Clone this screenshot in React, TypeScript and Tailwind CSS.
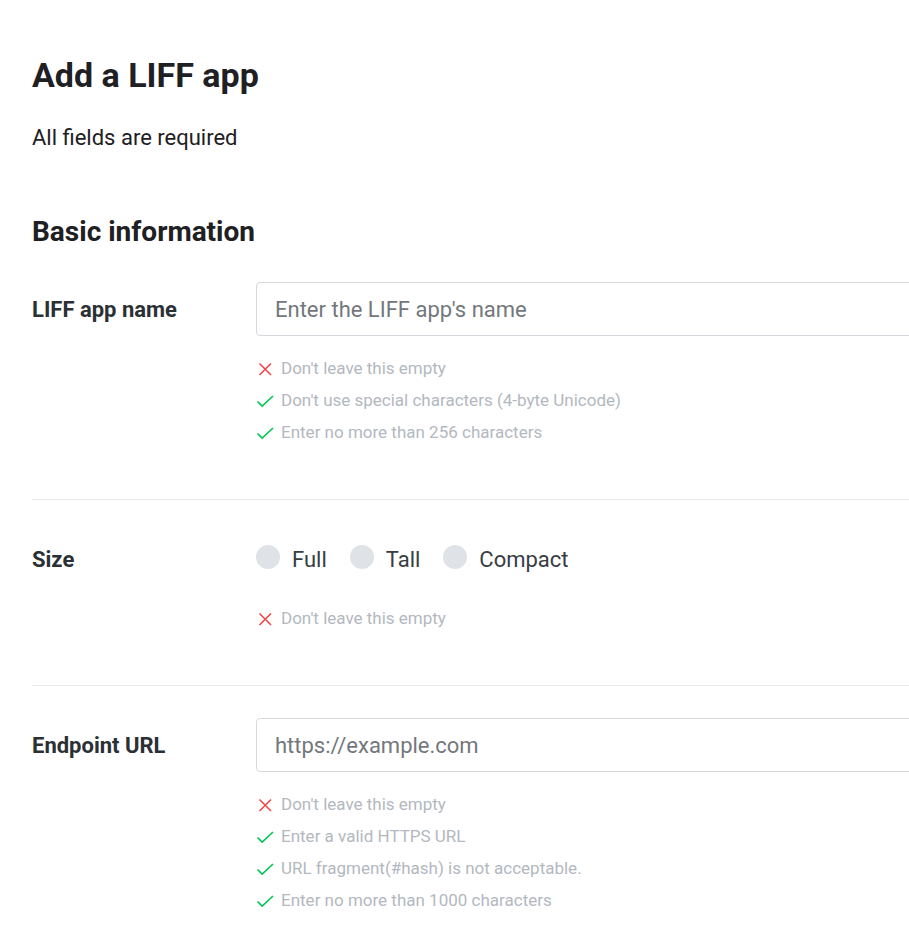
import type { ReactNode } from 'react';

type Rule = { ok: boolean; text: string };

function CrossIcon() {
  return (
    <svg width="20" height="20" viewBox="0 0 20 20" className="shrink-0">
      <path d="M3.5 4.5L15 16M15 4.5L3.5 16" stroke="#f0474a" strokeWidth="1.6" fill="none" />
    </svg>
  );
}

function CheckIcon() {
  return (
    <svg width="20" height="20" viewBox="0 0 20 20" className="shrink-0">
      <path d="M1.5 10.5L6.2 15L17 5" stroke="#06c755" strokeWidth="1.7" fill="none" />
    </svg>
  );
}

function Rules({ rules }: { rules: Rule[] }) {
  return (
    <ul className="mt-[17px]">
      {rules.map((r) => (
        <li key={r.text} className="flex items-center gap-[5px] h-8 text-[17px] text-[#b3b8bf]">
          {r.ok ? <CheckIcon /> : <CrossIcon />}
          <span>{r.text}</span>
        </li>
      ))}
    </ul>
  );
}

function FormRow({ label, children, rules, first }: { label: string; children: ReactNode; rules: Rule[]; first?: boolean }) {
  return (
    <div className={`grid grid-cols-[224px_1fr] pt-[32px] pb-[50px] ${first ? '' : 'border-t border-[#e9eaec]'}`}>
      <div className="h-[54px] flex items-center text-[22px] font-bold text-[#2b3034]">{label}</div>
      <div>
        {children}
        <Rules rules={rules} />
      </div>
    </div>
  );
}

function TextInput({ placeholder }: { placeholder: string }) {
  return (
    <input
      type="text"
      placeholder={placeholder}
      className="w-full h-[54px] px-[18px] border border-[#d5d8dc] rounded-[4px] text-[22px] text-[#2b3034] placeholder:text-[#73777c] outline-none bg-white"
    />
  );
}

function Radio({ label }: { label: string }) {
  return (
    <label className="flex items-center gap-3 cursor-pointer">
      <span className="w-6 h-6 rounded-full bg-[#dfe2e6] -mt-[5px]" />
      <span className="text-[22px] text-[#383d42]">{label}</span>
    </label>
  );
}

export default function App() {
  return (
    <div className="h-screen w-full overflow-hidden bg-white" style={{ fontFamily: 'Roboto, "Noto Sans", sans-serif' }}>
      <div className="w-[1200px] pl-8 pt-[55px]">
        <h1 className="text-[34px] leading-10 font-bold text-[#1e2023]">Add a LIFF app</h1>
        <p className="mt-[29px] text-[22px] leading-7 text-[#1e2023]">All fields are required</p>

        <h2 className="mt-[62px] text-[28px] leading-9 font-bold text-[#1e2023]">Basic information</h2>

        <FormRow
          first
          label="LIFF app name"
          rules={[
            { ok: false, text: "Don't leave this empty" },
            { ok: true, text: "Don't use special characters (4-byte Unicode)" },
            { ok: true, text: 'Enter no more than 256 characters' },
          ]}
        >
          <TextInput placeholder="Enter the LIFF app's name" />
        </FormRow>

        <FormRow label="Size" rules={[{ ok: false, text: "Don't leave this empty" }]}>
          <div className="h-[54px] flex items-center gap-[23px]">
            <Radio label="Full" />
            <Radio label="Tall" />
            <Radio label="Compact" />
          </div>
        </FormRow>

        <FormRow
          label="Endpoint URL"
          rules={[
            { ok: false, text: "Don't leave this empty" },
            { ok: true, text: 'Enter a valid HTTPS URL' },
            { ok: true, text: 'URL fragment(#hash) is not acceptable.' },
            { ok: true, text: 'Enter no more than 1000 characters' },
          ]}
        >
          <TextInput placeholder="https://example.com" />
        </FormRow>
      </div>
    </div>
  );
}
